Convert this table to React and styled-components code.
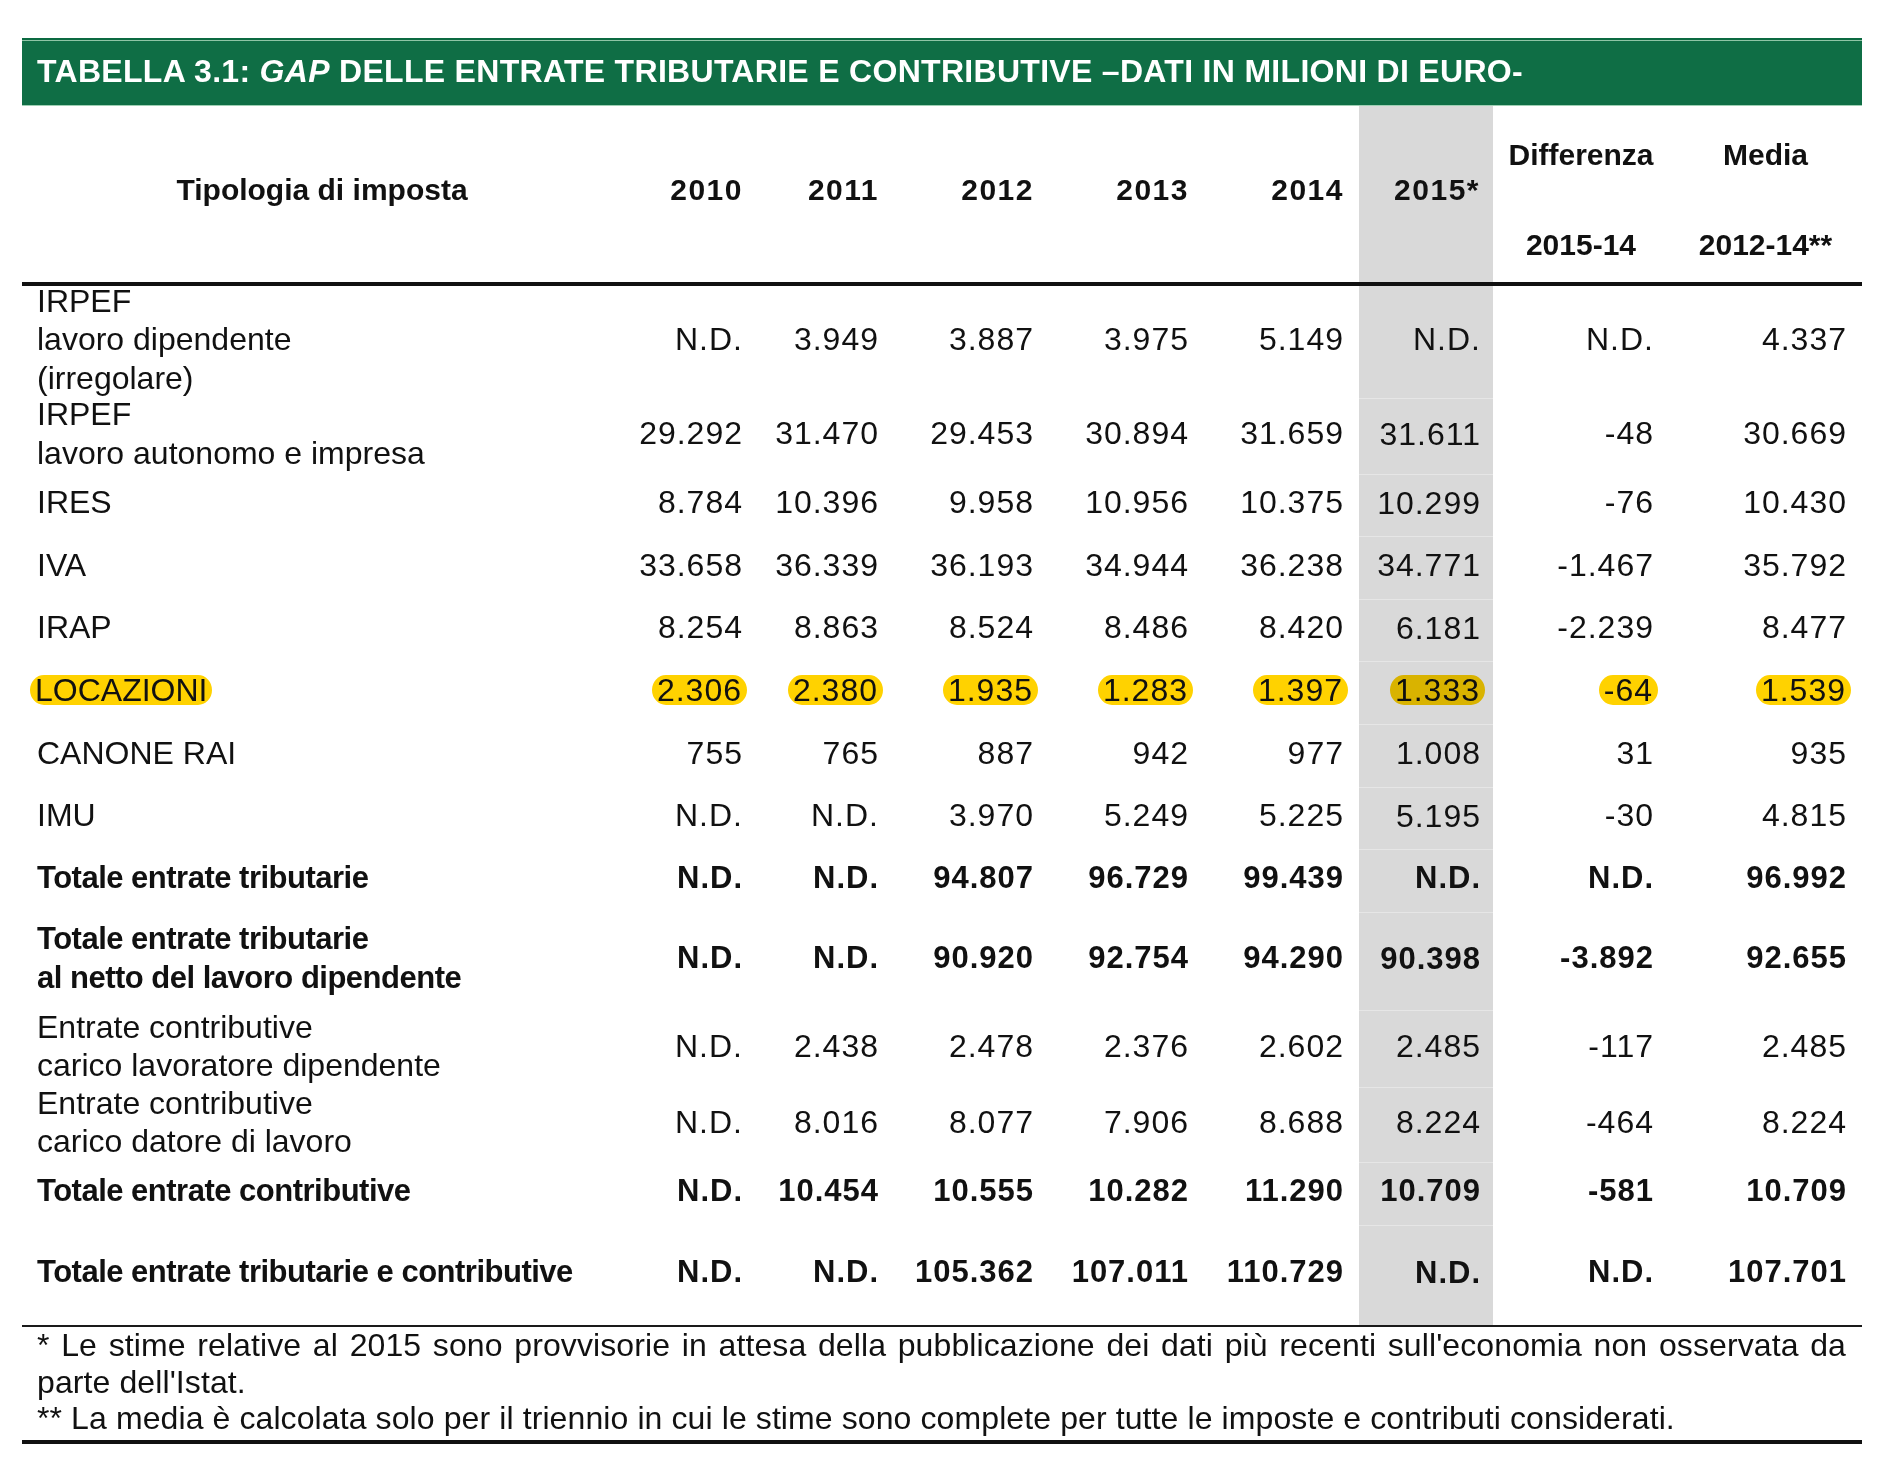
import React from "react";
import styled, { createGlobalStyle } from "styled-components";

const GlobalStyle = createGlobalStyle`
  body {
    margin: 0;
    background: #fff;
    color: #111;
    font-family: "Liberation Sans", Arial, sans-serif;
  }
`;

const Page = styled.div`
  padding: 38px 21px 0 22px;
  width: 1840px;
`;

const TitleBar = styled.div`
  height: 68px;
  box-sizing: border-box;
  padding: 0 15px;
  display: flex;
  align-items: center;
  background: linear-gradient(#0c6a41 0 2px, #8fc5a6 2px 3px, #0f6e45 3px);
  border-bottom: 1px solid #9fd0b4;
  color: #fff;
  font-weight: 700;
  font-size: 32px;
  letter-spacing: 0.3px;
  white-space: nowrap;

  em {
    font-style: italic;
  }
`;

const Table = styled.table`
  width: 1840px;
  table-layout: fixed;
  border-collapse: separate;
  border-spacing: 0;
`;

const HeadCell = styled.th`
  width: ${(p) => p.$w}px;
  height: 180px;
  box-sizing: border-box;
  padding: ${(p) => (p.$split ? "12px 0 0" : p.$align === "right" ? `0 ${p.$gray ? 13 : 15}px 8px 0` : "0 0 8px")};
  text-align: ${(p) => p.$align || "center"};
  vertical-align: middle;
  font-size: 30px;
  font-weight: 700;
  letter-spacing: ${(p) => (p.$align === "right" ? "1.5px" : "0")};
  line-height: 38px;
  background: ${(p) => (p.$gray ? "#d9d9d9" : "transparent")};
  border-bottom: 4px solid #111;
`;

const SplitHead = styled.div`
  display: flex;
  flex-direction: column;
  align-items: center;
  gap: 52px;
  letter-spacing: 0;
`;

const Row = styled.tr`
  height: ${(p) => p.$h}px;
`;

const LabelCell = styled.td`
  padding: 0 0 0 15px;
  vertical-align: middle;
  font-size: ${(p) => (p.$bold ? 31 : 32)}px;
  font-weight: ${(p) => (p.$bold ? 700 : 400)};
  letter-spacing: ${(p) => (p.$bold ? "-0.5px" : "0")};
  line-height: 38.5px;
  white-space: nowrap;
`;

const LabelText = styled.div`
  margin-top: -5px;
`;

const NumCell = styled.td`
  padding: 0 ${(p) => (p.$gray ? 12 : 15)}px 5px 0;
  text-align: right;
  vertical-align: middle;
  font-size: ${(p) => (p.$bold ? 31 : 32)}px;
  font-weight: ${(p) => (p.$bold ? 700 : 400)};
  letter-spacing: 1px;
  line-height: 38.5px;
  white-space: nowrap;
  background: ${(p) => (p.$gray ? "#d9d9d9" : "transparent")};
  border-top: ${(p) => (p.$gray && !p.$first ? "1px solid #e6e6e6" : "0")};
`;

const Marker = styled.span`
  display: inline-block;
  line-height: 30px;
  padding: 0 5px;
  margin: 3px ${(p) => (p.$lead ? "0 0 -7px" : "-4px 0 0")};
  border-radius: 14px / 15px;
  background: #ffd200;
  mix-blend-mode: multiply;
`;

const Notes = styled.div`
  width: 1840px;
  box-sizing: border-box;
  padding: 0 16px 3px 15px;
  border-top: 2px solid #1a1a1a;
  border-bottom: 4px solid #111;
  font-size: 32px;
  letter-spacing: 0.1px;
  line-height: 36.6px;
`;

const Note = styled.p`
  margin: 0;
  text-align: ${(p) => (p.$justify ? "justify" : "left")};
`;

const years = ["2010", "2011", "2012", "2013", "2014"];
const widths = [136, 136, 155, 155, 155];

const rows = [
  { label: ["IRPEF", "lavoro dipendente", "(irregolare)"], h: 112, v: ["N.D.", "3.949", "3.887", "3.975", "5.149", "N.D.", "N.D.", "4.337"] },
  { label: ["IRPEF", "lavoro autonomo e impresa"], h: 76, v: ["29.292", "31.470", "29.453", "30.894", "31.659", "31.611", "-48", "30.669"] },
  { label: ["IRES"], h: 62, v: ["8.784", "10.396", "9.958", "10.956", "10.375", "10.299", "-76", "10.430"] },
  { label: ["IVA"], h: 63, v: ["33.658", "36.339", "36.193", "34.944", "36.238", "34.771", "-1.467", "35.792"] },
  { label: ["IRAP"], h: 62, v: ["8.254", "8.863", "8.524", "8.486", "8.420", "6.181", "-2.239", "8.477"] },
  { label: ["LOCAZIONI"], h: 63, mark: true, v: ["2.306", "2.380", "1.935", "1.283", "1.397", "1.333", "-64", "1.539"] },
  { label: ["CANONE RAI"], h: 63, v: ["755", "765", "887", "942", "977", "1.008", "31", "935"] },
  { label: ["IMU"], h: 62, v: ["N.D.", "N.D.", "3.970", "5.249", "5.225", "5.195", "-30", "4.815"] },
  { label: ["Totale entrate tributarie"], h: 63, bold: true, v: ["N.D.", "N.D.", "94.807", "96.729", "99.439", "N.D.", "N.D.", "96.992"] },
  { label: ["Totale entrate tributarie", "al netto del lavoro dipendente"], h: 98, bold: true, v: ["N.D.", "N.D.", "90.920", "92.754", "94.290", "90.398", "-3.892", "92.655"] },
  { label: ["Entrate contributive", "carico lavoratore dipendente"], h: 77, v: ["N.D.", "2.438", "2.478", "2.376", "2.602", "2.485", "-117", "2.485"] },
  { label: ["Entrate contributive", "carico datore di lavoro"], h: 75, v: ["N.D.", "8.016", "8.077", "7.906", "8.688", "8.224", "-464", "8.224"] },
  { label: ["Totale entrate contributive"], h: 63, bold: true, v: ["N.D.", "10.454", "10.555", "10.282", "11.290", "10.709", "-581", "10.709"] },
  { label: ["Totale entrate tributarie e contributive"], h: 100, bold: true, v: ["N.D.", "N.D.", "105.362", "107.011", "110.729", "N.D.", "N.D.", "107.701"] },
];

const TaxGapTable = () => {
  return (
    <Page>
      <TitleBar>
        TABELLA 3.1:&nbsp;<em>GAP</em>&nbsp;DELLE ENTRATE TRIBUTARIE E CONTRIBUTIVE –DATI IN MILIONI DI EURO-
      </TitleBar>

      <Table>
        <thead>
          <tr>
            <HeadCell $w={600}>Tipologia di imposta</HeadCell>
            {years.map((y, i) => (
              <HeadCell key={y} $w={widths[i]} $align="right">{y}</HeadCell>
            ))}
            <HeadCell $w={134} $align="right" $gray>2015*</HeadCell>
            <HeadCell $w={176} $split>
              <SplitHead><span>Differenza</span><span>2015-14</span></SplitHead>
            </HeadCell>
            <HeadCell $w={193} $split>
              <SplitHead><span>Media</span><span>2012-14**</span></SplitHead>
            </HeadCell>
          </tr>
        </thead>
        <tbody>
          {rows.map((r, ri) => (
            <Row key={ri} $h={r.h}>
              <LabelCell $bold={r.bold}>
                <LabelText>
                  {r.mark ? (
                    <Marker $lead>{r.label[0]}</Marker>
                  ) : (
                    r.label.map((l, li) => <div key={li}>{l}</div>)
                  )}
                </LabelText>
              </LabelCell>
              {r.v.map((val, ci) => (
                <NumCell key={ci} $bold={r.bold} $gray={ci === 5} $first={ri === 0}>
                  {r.mark ? <Marker>{val}</Marker> : val}
                </NumCell>
              ))}
            </Row>
          ))}
        </tbody>
      </Table>

      <Notes>
        <Note $justify>
          * Le stime relative al 2015 sono provvisorie in attesa della pubblicazione dei dati più recenti sull'economia non osservata da parte dell'Istat.
        </Note>
        <Note>
          ** La media è calcolata solo per il triennio in cui le stime sono complete per tutte le imposte e contributi considerati.
        </Note>
      </Notes>
    </Page>
  );
};

const App = () => (
  <>
    <GlobalStyle />
    <TaxGapTable />
  </>
);

export default App;
